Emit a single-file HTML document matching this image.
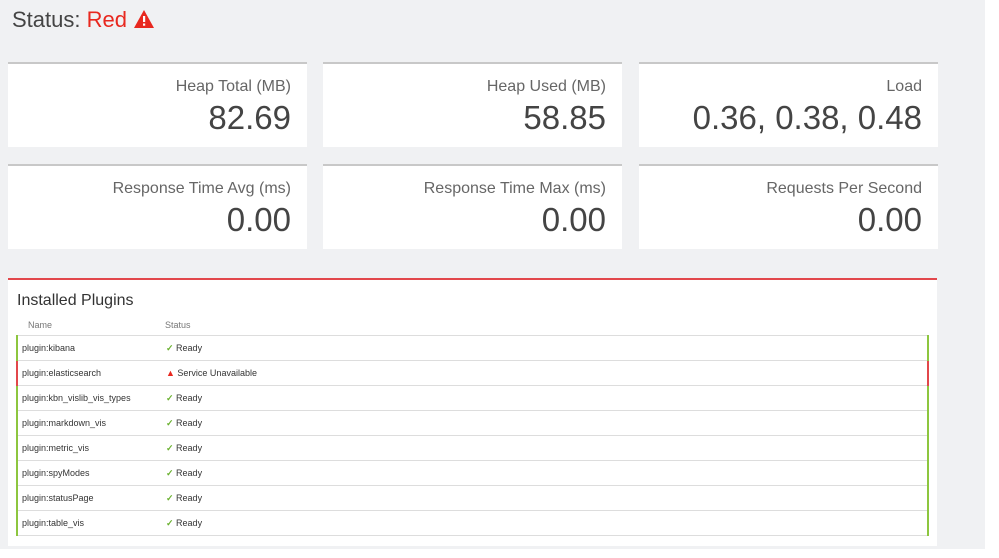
<!DOCTYPE html>
<html><head><style>
body{margin:0;width:999px;height:558px;background:#fff;font-family:"Liberation Sans",sans-serif;overflow:hidden;position:relative}
.bg{position:absolute;left:0;top:0;width:985px;height:549px;background:#f0f1f3}
.title{position:absolute;left:12px;top:7px;font-size:22px;color:#444}
.title span{color:#e8281f}
.card{position:absolute;width:299px;height:85px;background:#fff;border-top:2px solid #c8c8c8;text-align:right;box-sizing:border-box;padding-right:16px}
.card .l{font-size:16px;color:#666;margin-top:14px}
.card .v{font-size:33px;color:#444;margin-top:3px}
.panel{position:absolute;left:8px;top:278px;width:929px;height:268px;background:#fff;border-top:2px solid #e2474b;box-sizing:border-box}
.panel h3{margin:0;position:absolute;left:9px;top:12px;font-weight:normal;font-size:16px;color:#333}
.hdr{position:absolute;top:40px;font-size:9px;color:#777}
table{position:absolute;left:8px;top:55px;width:913px;border-collapse:collapse;font-size:9px;color:#333}
td{height:24px;border-bottom:1px solid #ddd;padding:0 0 0 4px}
tr{border-left:2px solid #8dc63f;border-right:2px solid #8dc63f}
tr.r{border-left-color:#e2474b;border-right-color:#e2474b}
tr:first-child td{border-top:1px solid #ddd}
td:first-child{width:140px}
.ck{color:#6ab12f;font-weight:bold}
.wn{color:#e8281f}
</style></head><body>
<div class="bg"></div>
<div class="title">Status: <span>Red <svg width="22" height="20" viewBox="0 0 22 20" style="vertical-align:-2px"><path d="M11 1L21 19H1Z" fill="#e8281f"/><rect x="10" y="7" width="2.2" height="6" fill="#fff"/><rect x="10" y="14.5" width="2.2" height="2.2" fill="#fff"/></svg></span></div>
<div class="card" style="left:8px;top:62px"><div class="l">Heap Total (MB)</div><div class="v">82.69</div></div>
<div class="card" style="left:323px;top:62px"><div class="l">Heap Used (MB)</div><div class="v">58.85</div></div>
<div class="card" style="left:639px;top:62px"><div class="l">Load</div><div class="v">0.36, 0.38, 0.48</div></div>
<div class="card" style="left:8px;top:164px"><div class="l">Response Time Avg (ms)</div><div class="v">0.00</div></div>
<div class="card" style="left:323px;top:164px"><div class="l">Response Time Max (ms)</div><div class="v">0.00</div></div>
<div class="card" style="left:639px;top:164px"><div class="l">Requests Per Second</div><div class="v">0.00</div></div>
<div class="panel">
<h3>Installed Plugins</h3>
<div class="hdr" style="left:20px">Name</div><div class="hdr" style="left:157px">Status</div>
<table>
<tr><td>plugin:kibana</td><td><span class="ck">✓</span> Ready</td></tr>
<tr class="r"><td>plugin:elasticsearch</td><td><span class="wn">▲</span> Service Unavailable</td></tr>
<tr><td>plugin:kbn_vislib_vis_types</td><td><span class="ck">✓</span> Ready</td></tr>
<tr><td>plugin:markdown_vis</td><td><span class="ck">✓</span> Ready</td></tr>
<tr><td>plugin:metric_vis</td><td><span class="ck">✓</span> Ready</td></tr>
<tr><td>plugin:spyModes</td><td><span class="ck">✓</span> Ready</td></tr>
<tr><td>plugin:statusPage</td><td><span class="ck">✓</span> Ready</td></tr>
<tr><td>plugin:table_vis</td><td><span class="ck">✓</span> Ready</td></tr>
</table>
</div>
</body></html>
